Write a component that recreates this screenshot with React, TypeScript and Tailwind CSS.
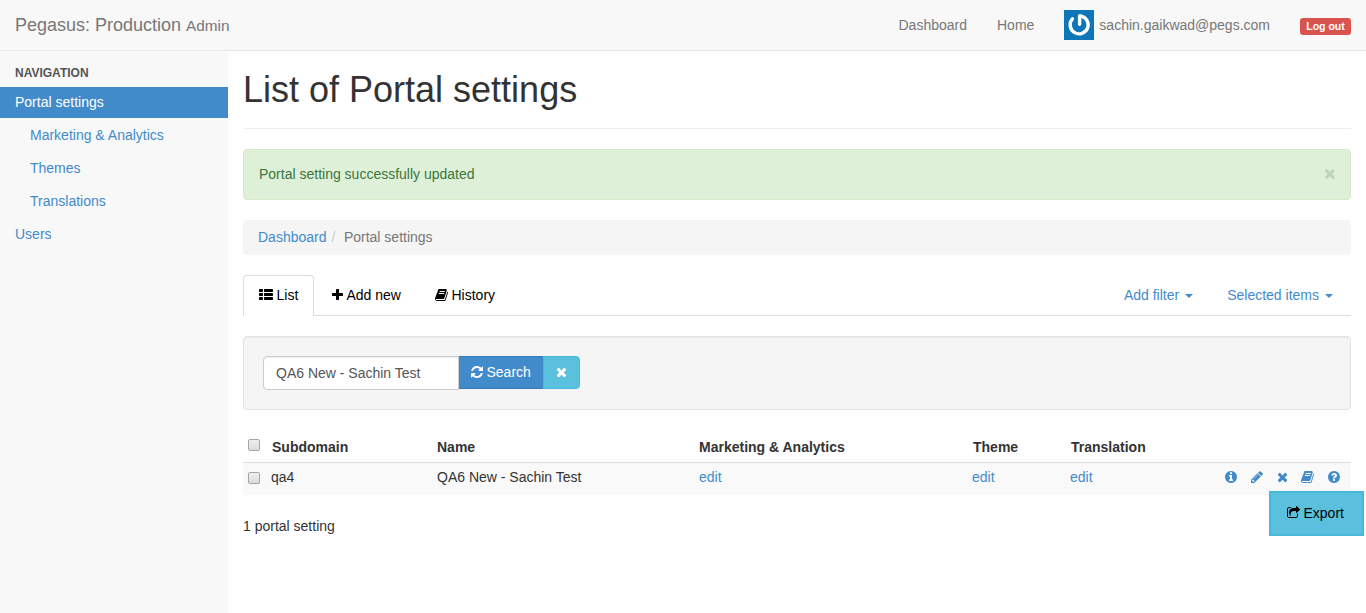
import React from "react";

const glyphs = {
  list: {
    box: "0 0 1792 1792",
    d: "M512 1248v192q0 40-28 68t-68 28h-320q-40 0-68-28t-28-68v-192q0-40 28-68t68-28h320q40 0 68 28t28 68zm0-512v192q0 40-28 68t-68 28h-320q-40 0-68-28t-28-68v-192q0-40 28-68t68-28h320q40 0 68 28t28 68zm1280 512v192q0 40-28 68t-68 28h-960q-40 0-68-28t-28-68v-192q0-40 28-68t68-28h960q40 0 68 28t28 68zm-1280-1024v192q0 40-28 68t-68 28h-320q-40 0-68-28t-28-68v-192q0-40 28-68t68-28h320q40 0 68 28t28 68zm1280 512v192q0 40-28 68t-68 28h-960q-40 0-68-28t-28-68v-192q0-40 28-68t68-28h960q40 0 68 28t28 68zm0-512v192q0 40-28 68t-68 28h-960q-40 0-68-28t-28-68v-192q0-40 28-68t68-28h960q40 0 68 28t28 68z",
  },
  plus: {
    box: "192 0 1408 1792",
    d: "M1600 736v192q0 40-28 68t-68 28h-416v416q0 40-28 68t-68 28h-192q-40 0-68-28t-28-68v-416h-416q-40 0-68-28t-28-68v-192q0-40 28-68t68-28h416v-416q0-40 28-68t68-28h192q40 0 68 28t28 68v416h416q40 0 68 28t28 68z",
  },
  book: {
    box: "64 0 1664 1792",
    d: "M1703 478q40 57 18 129l-275 906q-19 64-76.5 107.5t-122.5 43.5h-923q-77 0-148.5-53.5t-99.5-131.5q-24-67-2-127 0-4 3-27t4-37q1-8-3-21.5t-3-19.5q2-11 8-21t16.5-23.5 16.5-23.5q23-38 45-91.5t30-91.5q3-10 .5-30t-.5-28q3-11 17-28t17-23q21-36 42-92t25-90q1-9-2.5-32t.5-28q4-13 22-30.5t22-22.5q19-26 42.5-84.5t27.5-96.5q1-8-3-25.5t-2-26.5q2-8 9-18t18-23 17-21q8-12 16.5-30.5t15-35 16-36 19.5-32 26.5-23.5 36-11.5 47.5 5.5l-1 3q38-9 51-9h761q74 0 114 56t18 130l-274 906q-36 119-71.5 153.5t-128.5 34.5h-869q-27 0-38 15-11 16-1 43 24 70 144 70h923q29 0 56-15.5t35-41.5l300-987q7-22 5-57 38 15 59 43zm-1064 2q-4 13 2 22.5t20 9.5h608q13 0 25.5-9.5t16.5-22.5l21-64q4-13-2-22.5t-20-9.5h-608q-13 0-25.5 9.5t-16.5 22.5zm-83 256q-4 13 2 22.5t20 9.5h608q13 0 25.5-9.5t16.5-22.5l21-64q4-13-2-22.5t-20-9.5h-608q-13 0-25.5 9.5t-16.5 22.5z",
  },
  refresh: {
    box: "128 0 1536 1792",
    d: "M1639 1056q0 5-1 7-64 268-268 434.5t-478 166.5q-146 0-282.5-55t-243.5-157l-129 129q-19 19-45 19t-45-19-19-45v-448q0-26 19-45t45-19h448q26 0 45 19t19 45-19 45l-137 137q71 66 161 102t187 36q134 0 250-65t186-179q11-17 53-117 8-23 30-23h192q13 0 22.5 9.5t9.5 22.5zm25-800v448q0 26-19 45t-45 19h-448q-26 0-45-19t-19-45 19-45l138-138q-148-137-349-137-134 0-250 65t-186 179q-11 17-53 117-8 23-30 23h-199q-13 0-22.5-9.5t-9.5-22.5v-7q65-268 270-434.5t480-166.5q146 0 284 55.5t245 156.5l130-129q19-19 45-19t45 19 19 45z",
  },
  times: {
    box: "192 0 1408 1792",
    d: "M1490 1322q0 40-28 68l-136 136q-28 28-68 28t-68-28l-294-294-294 294q-28 28-68 28t-68-28l-136-136q-28-28-28-68t28-68l294-294-294-294q-28-28-28-68t28-68l136-136q28-28 68-28t68 28l294 294 294-294q28-28 68-28t68 28l136 136q28 28 28 68t-28 68l-294 294 294 294q28 28 28 68z",
  },
  info: {
    box: "128 0 1536 1792",
    d: "M1152 1376v-160q0-14-9-23t-23-9h-96v-512q0-14-9-23t-23-9h-320q-14 0-23 9t-9 23v160q0 14 9 23t23 9h96v320h-96q-14 0-23 9t-9 23v160q0 14 9 23t23 9h448q14 0 23-9t9-23zm-128-896v-160q0-14-9-23t-23-9h-192q-14 0-23 9t-9 23v160q0 14 9 23t23 9h192q14 0 23-9t9-23zm640 416q0 209-103 385.5t-279.5 279.5-385.5 103-385.5-103-279.5-279.5-103-385.5 103-385.5 279.5-279.5 385.5-103 385.5 103 279.5 279.5 103 385.5z",
  },
  pencil: {
    box: "128 0 1536 1792",
    d: "M491 1536l91-91-235-235-91 91v107h128v128h107zm523-928q0-22-22-22-10 0-17 7l-542 542q-7 7-7 17 0 22 22 22 10 0 17-7l542-542q7-7 7-17zm-54-192l416 416-832 832h-416v-416zm683 96q0 53-37 90l-166 166-416-416 166-165q36-38 90-38 53 0 91 38l235 234q37 39 37 91z",
  },
  question: {
    box: "128 0 1536 1792",
    d: "M1024 1376v-192q0-14-9-23t-23-9h-192q-14 0-23 9t-9 23v192q0 14 9 23t23 9h192q14 0 23-9t9-23zm256-672q0-88-55.5-163t-138.5-116-170-41q-243 0-371 213-15 24 8 42l132 100q7 6 19 6 16 0 25-12 53-68 86-92 34-24 86-24 48 0 85.5 26t37.5 59q0 38-20 61t-68 45q-63 28-115.5 86.5t-52.5 125.5v36q0 14 9 23t23 9h192q14 0 23-9t9-23q0-19 21.5-49.5t54.5-49.5q32-18 49-28.5t46-35 44.5-48 28-60.5 12.5-81zm384 192q0 209-103 385.5t-279.5 279.5-385.5 103-385.5-103-279.5-279.5-103-385.5 103-385.5 279.5-279.5 385.5-103 385.5 103 279.5 279.5 103 385.5z",
  },
  share: {
    box: "64 0 1664 1792",
    d: "M1472 989v259q0 119-84.5 203.5t-203.5 84.5h-832q-119 0-203.5-84.5t-84.5-203.5v-832q0-119 84.5-203.5t203.5-84.5h255q13 0 22.5 9.5t9.5 22.5q0 27-26 32-77 26-133 60-10 4-16 4h-112q-66 0-113 47t-47 113v832q0 66 47 113t113 47h832q66 0 113-47t47-113v-214q0-19 18-28 28-13 54-37 16-16 35-8 21 9 21 29zm237-496l-384 384q-18 19-45 19-12 0-25-5-39-17-39-59v-192h-160q-323 0-438 131-119 137-74 473 3 23-20 34-8 2-12 2-16 0-26-13-10-14-21-31t-39.5-68.5-49.5-99.5-38.5-114-17.5-122q0-49 3.5-91t14-90 28-88 47-81.5 68.5-74 94.5-61.5 124.5-48.5 159.5-30.5 196.5-11h160v-192q0-42 39-59 13-5 25-5 26 0 45 19l384 384q19 19 19 45t-19 45z",
  },
};

function Icon({ name, className = "h-[14px]" }: { name: keyof typeof glyphs; className?: string }) {
  return (
    <svg viewBox={glyphs[name].box} className={`w-auto shrink-0 fill-current ${className}`} aria-hidden="true">
      <path d={glyphs[name].d} />
    </svg>
  );
}

function Caret() {
  return (
    <svg viewBox="0 0 8 4" className="mt-[2px] ml-[5px] h-[4px] w-[8px] fill-current" aria-hidden="true">
      <path d="M0 0h8L4 4z" />
    </svg>
  );
}

function Checkbox({ className = "" }: { className?: string }) {
  return (
    <input
      type="checkbox"
      className={`block size-[12px] appearance-none rounded-[2px] border border-[#a6a6a6] bg-linear-to-b from-[#eeeeee] to-[#dcdcdc] ${className}`}
    />
  );
}

function Header() {
  return (
    <header className="flex h-[51px] items-start border-b border-[#e7e7e7] bg-[#f8f8f8] pr-[15px] pl-[15px] text-[#777]">
      <a className="pt-[15px] text-[18px] leading-5">
        Pegasus: Production <small className="text-[15.3px]">Admin</small>
      </a>
      <nav className="ml-auto flex">
        <a className="pt-[15px]">Dashboard</a>
        <a className="ml-[30px] pt-[15px]">Home</a>
        <a className="ml-[30px] flex">
          <svg viewBox="0 0 30 30" className="mt-[10px] size-[30px]" aria-hidden="true">
            <path fill="#0c76b8" d="M0 0h30v30H0z" />
            <path
              d="M8.4 8.9A9 9 0 1 0 18 6.3L15.6 5.9v8.3"
              fill="none"
              stroke="#fff"
              strokeWidth="3.4"
              strokeLinecap="round"
              strokeLinejoin="round"
            />
          </svg>
          <span className="ml-[5px] pt-[15px]">sachin.gaikwad@pegs.com</span>
        </a>
        <a className="mt-[18px] ml-[30px] h-[17px] w-[51px] rounded-[3px] bg-[#d9534f] text-center text-[10.5px] leading-[17px] font-bold text-white">
          Log out
        </a>
      </nav>
    </header>
  );
}

function Sidebar() {
  const link = "flex h-[31px] items-center pb-[2px] text-[#428bca]";
  return (
    <aside className="w-[228px] shrink-0 bg-[#f8f8f8]">
      <h2 className="mt-[12px] mb-[4px] pl-[15px] text-[12px] leading-5 font-bold text-[#555]">NAVIGATION</h2>
      <ul className="flex flex-col gap-[2px]">
        <li className="flex h-[31px] items-center bg-[#428bca] pb-[2px] pl-[15px] text-white">Portal settings</li>
        <li className={`${link} pl-[30px]`}>Marketing &amp; Analytics</li>
        <li className={`${link} pl-[30px]`}>Themes</li>
        <li className={`${link} pl-[30px]`}>Translations</li>
        <li className={`${link} pl-[15px]`}>Users</li>
      </ul>
    </aside>
  );
}

function Tabs() {
  return (
    <div className="mt-[20px] flex h-[41px] border-b border-[#ddd] text-black">
      <a className="flex h-[41px] w-[71px] items-center gap-[3.5px] rounded-t-[4px] border border-b-0 border-[#ddd] bg-white pb-[2px] pl-[15px]">
        <Icon name="list" /> List
      </a>
      <a className="ml-[18px] flex h-[40px] items-center gap-[3.5px]">
        <Icon name="plus" /> Add new
      </a>
      <a className="ml-[34px] flex h-[40px] items-center gap-[3.5px]">
        <Icon name="book" /> History
      </a>
      <a className="mr-[34px] ml-auto flex h-[40px] items-center gap-px text-[#428bca]">
        Add filter <Caret />
      </a>
      <a className="mr-[18px] flex h-[40px] items-center gap-px text-[#428bca]">
        Selected items <Caret />
      </a>
    </div>
  );
}

function SearchForm() {
  return (
    <form className="mt-[20px] flex h-[74px] rounded-[4px] border border-[#e3e3e3] bg-[#f5f5f5] pt-[19px] pl-[19px] shadow-[inset_0_1px_1px_rgba(0,0,0,0.05)]">
      <input
        className="h-[34px] w-[196px] rounded-l-[4px] border border-[#ccc] bg-white px-[12px] text-[#555] shadow-[inset_0_1px_1px_rgba(0,0,0,0.075)]"
        defaultValue="QA6 New - Sachin Test"
      />
      <button type="button" className="flex h-[33px] w-[84px] items-center gap-[3.5px] border-y border-[#357ebd] bg-[#428bca] pb-px pl-[12px] text-white">
        <Icon name="refresh" /> Search
      </button>
      <button type="button" className="flex h-[33px] w-[37px] items-center justify-center rounded-r-[4px] border border-[#46b8da] bg-[#5bc0de] pb-px text-white">
        <Icon name="times" />
      </button>
    </form>
  );
}

function SettingsTable() {
  const cols = "grid grid-cols-[28px_166px_262px_273px_98px_155px_1fr]";
  return (
    <div className="mt-[20px]">
      <div className={`${cols} h-[33px] border-b border-[#ddd] pt-[7px] font-bold`}>
        <Checkbox className="mt-[2px] ml-[5px]" />
        <span className="pl-[1px]">Subdomain</span>
        <span>Name</span>
        <span>Marketing &amp; Analytics</span>
        <span className="pl-px">Theme</span>
        <span className="pl-px">Translation</span>
      </div>
      <div className={`${cols} h-[32px] bg-[#f9f9f9] pt-[4px]`}>
        <Checkbox className="mt-[5px] ml-[5px]" />
        <span>qa4</span>
        <span>QA6 New - Sachin Test</span>
        <a className="text-[#428bca]">edit</a>
        <a className="text-[#428bca]">edit</a>
        <a className="text-[#428bca]">edit</a>
        <span className="flex h-5 items-center gap-[13.8px] text-[#428bca]">
          <Icon name="info" />
          <Icon name="pencil" />
          <Icon name="times" />
          <Icon name="book" />
          <Icon name="question" />
        </span>
      </div>
    </div>
  );
}

export default function App() {
  return (
    <div className="relative flex h-[613px] w-[1366px] flex-col overflow-hidden bg-white font-['Liberation_Sans',Arial,sans-serif] text-[14px] leading-5 text-[#333]">
      <Header />
      <div className="flex flex-1">
        <Sidebar />
        <main className="flex-1 pr-[15px] pl-[15px]">
          <h1 className="h-[78px] border-b border-[#eee] pt-[19px] text-[36px] leading-[40px]">List of Portal settings</h1>
          <div className="mt-[20px] flex h-[51px] items-center justify-between rounded-[4px] border border-[#d6e9c6] bg-[#dff0d8] pr-[14px] pb-[2px] pl-[15px] text-[#3c763d]">
            Portal setting successfully updated
            <Icon name="times" className="h-[15px] text-[#bdd6ba]" />
          </div>
          <nav className="mt-[20px] flex h-[35px] items-center rounded-[4px] bg-[#f5f5f5] pb-[2px] pl-[15px] text-[#777]">
            <a className="text-[#428bca]">Dashboard</a>
            <span className="px-[5px] text-[#ccc]">/</span>
            <span className="pl-[3.5px]">Portal settings</span>
          </nav>
          <Tabs />
          <SearchForm />
          <SettingsTable />
          <p className="mt-[21px]">1 portal setting</p>
        </main>
      </div>
      <a className="absolute top-[491px] left-[1269px] flex h-[45px] w-[95px] items-center gap-[4px] border-2 border-[#46b8da] bg-[#5bc0de] pb-[2px] pl-[15.5px] text-black">
        <Icon name="share" /> Export
      </a>
    </div>
  );
}
